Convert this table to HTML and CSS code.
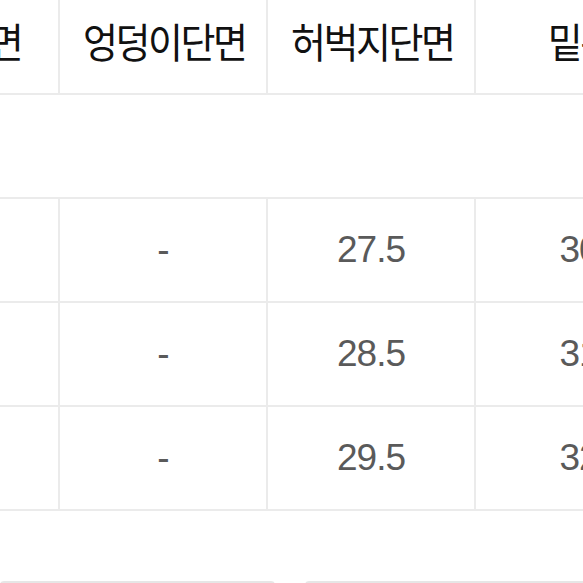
FILE: index.html
```html
<!DOCTYPE html>
<html lang="ko">
<head>
<meta charset="utf-8">
<link rel="stylesheet" href="styles.css">
</head>
<body>
<div class="page">
  <table class="size-table">
    <thead>
      <tr class="head-row">
        <th><span class="head-label">허리단면</span></th>
        <th><span class="head-label">엉덩이단면</span></th>
        <th><span class="head-label">허벅지단면</span></th>
        <th><span class="head-label">밑위</span></th>
        <th><span class="head-label">밑단단면</span></th>
      </tr>
    </thead>
    <tbody>
      <tr class="blank-row"><td colspan="5"></td></tr>
      <tr>
        <td>27</td>
        <td>-</td>
        <td>27.5</td>
        <td>30</td>
        <td>18</td>
      </tr>
      <tr>
        <td>28</td>
        <td>-</td>
        <td>28.5</td>
        <td>31</td>
        <td>18.5</td>
      </tr>
      <tr>
        <td>29</td>
        <td>-</td>
        <td>29.5</td>
        <td>32</td>
        <td>19</td>
      </tr>
    </tbody>
  </table>
  <div class="tabs">
    <div class="tab tab-left"></div>
    <div class="tab tab-right"></div>
  </div>
</div>
</body>
</html>
```

FILE: styles.css
```css
html, body {
  margin: 0;
  padding: 0;
  background: #ffffff;
}

body {
  width: 583px;
  height: 583px;
  overflow: hidden;
}

.page {
  margin-left: -150px;
  margin-top: -11px;
  width: 1100px;
}

.size-table {
  border-collapse: collapse;
  table-layout: fixed;
  font-family: "Liberation Sans", "Noto Sans CJK KR", sans-serif;
}

.size-table th,
.size-table td {
  width: 206px;
  height: 102px;
  padding: 0;
  border: 2px solid #ebebeb;
  text-align: center;
  vertical-align: middle;
}

.size-table th {
  font-family: "Noto Sans CJK KR", sans-serif;
  font-weight: 400;
  font-size: 38px;
  letter-spacing: -2.5px;
  color: #111111;
}

.head-label {
  display: inline-block;
  transform: translateY(-2px) scaleY(1.08);
  margin-right: -2.5px;
}

.size-table td {
  font-size: 37px;
  letter-spacing: -1px;
  color: #5a5a5a;
}

.blank-row td {
  height: 102px;
}

.tabs {
  display: flex;
  gap: 30px;
  margin-top: 70px;
  margin-left: 150px;
}

.tab {
  height: 10px;
  background: #e6e6e6;
  border-radius: 4px 4px 0 0;
}

.tab-left {
  width: 275px;
}

.tab-right {
  width: 300px;
}
```
